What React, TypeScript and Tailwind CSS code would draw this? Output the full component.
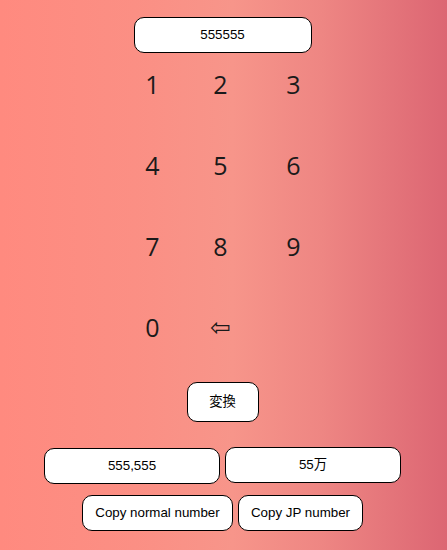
import React from "react";

export default function App() {
  const rows = [
    ["1", "2", "3"],
    ["4", "5", "6"],
    ["7", "8", "9"],
    ["0", "⇦", ""],
  ];
  const arial = { fontFamily: '"Liberation Sans", Arial, "Noto Sans CJK JP", sans-serif' };
  return (
    <div
      className="w-full min-h-[550px] pr-[2px] flex flex-col items-center bg-[linear-gradient(to_right,#ff8a7f_0%,#fb8f84_30%,#f7958a_52%,#ee8683_72%,#dc6673_100%)]"
      style={arial}
    >
      <div className="mt-[17px] w-[178px] h-[36px] bg-white border border-black rounded-[10px] flex items-center justify-center text-[13.33px] text-black">
        555555
      </div>
      <div className="mt-[12px] grid grid-cols-[68px_68px_78px] gap-y-[41px] ml-[6px]">
        {rows.flat().map((d, i) => (
          <div
            key={i}
            className="h-[40px] flex items-center justify-center text-[25px] font-normal text-[#1a1a1a]"
            style={
              d === "⇦"
                ? { fontFamily: '"DejaVu Sans", sans-serif', fontSize: "25px", fontWeight: 400 }
                : { fontFamily: '"Open Sans", sans-serif' }
            }
          >
            {d}
          </div>
        ))}
      </div>
      <div className="mt-[34px] w-[72px] h-[40px] bg-white border border-black rounded-[10px] flex items-center justify-center text-[13.33px] text-black">
        変換
      </div>
      <div className="mt-[25px] flex items-start gap-[5px]">
        <div className="w-[176px] h-[36px] bg-white border border-black rounded-[10px] flex items-center justify-center text-[13.33px] text-black mt-[1px]">
          555,555
        </div>
        <div className="w-[176px] h-[36px] bg-white border border-black rounded-[10px] flex items-center justify-center text-[13.33px] text-black">
          55万
        </div>
      </div>
      <div className="mt-[11px] flex gap-[5px]">
        <div className="w-[151px] h-[36px] bg-white border border-black rounded-[10px] flex items-center justify-center text-[13.33px] text-black">
          Copy normal number
        </div>
        <div className="w-[125px] h-[36px] bg-white border border-black rounded-[10px] flex items-center justify-center text-[13.33px] text-black">
          Copy JP number
        </div>
      </div>
    </div>
  );
}
